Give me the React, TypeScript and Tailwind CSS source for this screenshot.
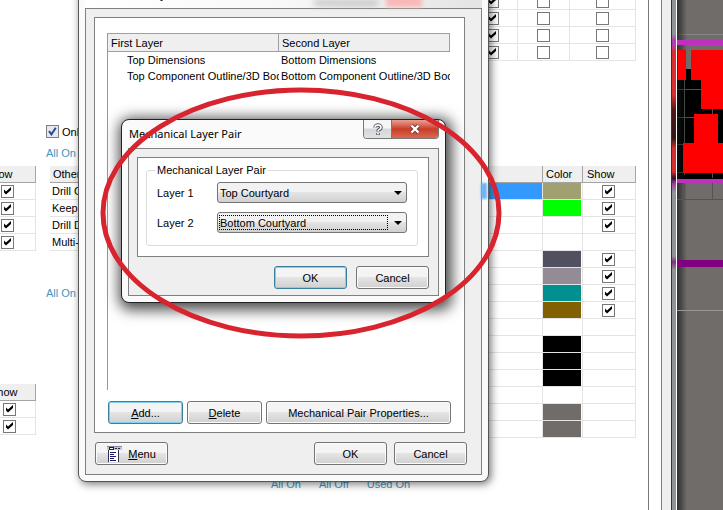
import React, { useId } from "react";

const UI = "font-['Liberation_Sans',Arial,sans-serif] text-[11px] leading-4 text-black";

function Tick({ blue = false }: { blue?: boolean }) {
  return (
    <svg className="pointer-events-none col-start-1 row-start-1 size-[9px]" viewBox="0 0 9 9">
      {blue ? (
        <path d="M1 4.2 L3.4 7.4 L7.8 0.8" fill="none" stroke="#34488c" strokeWidth="2" />
      ) : (
        <path d="M1 2.6 L3 4.6 L8 0 V3 L3 7.6 L1 5.6 Z" fill="#000" />
      )}
    </svg>
  );
}

function Check({ checked, label }: { checked?: boolean; label: string }) {
  return (
    <span className="mx-auto grid size-[13px] place-items-center">
      <input
        type="checkbox"
        aria-label={label}
        defaultChecked={checked}
        className="col-start-1 row-start-1 size-[13px] appearance-none border border-[#777] bg-white"
      />
      {checked && <Tick />}
    </span>
  );
}

const TH = "h-[17px] border-r border-b border-[#a5a5a5] bg-[#efefef] p-0 text-left font-normal whitespace-nowrap";
const TD = "h-[17px] border-r border-b border-[#e4e4e4] p-0 whitespace-nowrap leading-3";

function ShowTable({ rows, width, className }: { rows: string[]; width: string; className: string }) {
  return (
    <div className={"flex justify-end overflow-hidden " + className}>
      <table className={"shrink-0 table-fixed border-separate border-spacing-0 " + width}>
        <thead>
          <tr>
            <th className={TH + " pl-1.5"}>Show</th>
          </tr>
        </thead>
        <tbody>
          {rows.map((r) => (
            <tr key={r}>
              <td className={TD}>
                <Check checked label={"Show " + r} />
              </td>
            </tr>
          ))}
        </tbody>
      </table>
    </div>
  );
}

const SYSTEM: { color: string; show: boolean; selected?: boolean }[] = [
  { color: "bg-[#a0a070]", show: true, selected: true },
  { color: "bg-[#00ff00]", show: true },
  { color: "", show: true },
  { color: "", show: false },
  { color: "bg-[#505060]", show: true },
  { color: "bg-[#948c94]", show: true },
  { color: "bg-[#009090]", show: true },
  { color: "bg-[#806000]", show: true },
  { color: "", show: false },
  { color: "bg-black", show: false },
  { color: "bg-black", show: false },
  { color: "bg-black", show: false },
  { color: "", show: false },
  { color: "bg-[#706c6a]", show: false },
  { color: "bg-[#706c6a]", show: false },
];

function Link({ children }: { children: React.ReactNode }) {
  return (
    <a href="#" className="text-[#4096c4]">
      {children}
    </a>
  );
}

function LayersWindow() {
  return (
    <div className="flex min-w-0 flex-1">
      <div className="flex min-w-0 flex-1 flex-col overflow-hidden border-r border-[#777] bg-white">
        <div className="flex h-[476px] shrink-0 pr-3">
          <div className="w-9 shrink-0 pt-[166px]">
            <ShowTable rows={["signal 1", "signal 2", "signal 3", "signal 4"]} width="w-[57px]" className="" />
            <ShowTable rows={["mask 1", "mask 2"]} width="w-[52px]" className="mt-[133px]" />
          </div>
          <div className="ml-2.5 w-[230px] shrink-0 pt-[123px]">
            <label className="flex h-[17px] items-center gap-[3px]">
              <span className="grid size-[13px] place-items-center">
                <input
                  type="checkbox"
                  defaultChecked
                  className="col-start-1 row-start-1 size-[13px] appearance-none border border-[#808080] bg-[#e4e8f2]"
                />
                <Tick blue />
              </span>
              Only show enabled
            </label>
            <div className="mt-[5px] h-[21px]">
              <Link>All On</Link>
            </div>
            <table className="ml-1 w-[200px] table-fixed border-separate border-spacing-0">
              <thead>
                <tr>
                  <th className={TH + " pl-[3px]"}>Other Layers</th>
                </tr>
              </thead>
              <tbody>
                {["Drill Guide", "Keep-Out Layer", "Drill Drawing", "Multi-Layer"].map((n) => (
                  <tr key={n}>
                    <td className={TD + " pl-0.5"}>{n}</td>
                  </tr>
                ))}
              </tbody>
            </table>
            <div className="mt-[34px]">
              <Link>All On</Link>
            </div>
          </div>
          <div className="flex min-w-0 flex-1 flex-col">
            <table className="-mt-[7px] w-full table-fixed border-separate border-spacing-0">
              <colgroup>
                <col />
                <col className="w-[50px]" />
                <col className="w-[52px]" />
                <col className="w-[66px]" />
              </colgroup>
              <tbody>
                {[1, 2, 3, 4].map((n) => (
                  <tr key={n}>
                    <td className={TD} />
                    <td className={TD}>
                      <Check checked label={"Enable mechanical " + n} />
                    </td>
                    <td className={TD}>
                      <Check label={"Single layer mechanical " + n} />
                    </td>
                    <td className={TD}>
                      <Check label={"Link mechanical " + n} />
                    </td>
                  </tr>
                ))}
              </tbody>
            </table>
            <table className="mt-[105px] w-full table-fixed border-separate border-spacing-0">
              <colgroup>
                <col />
                <col className="w-10" />
                <col className="w-[53px]" />
              </colgroup>
              <thead>
                <tr>
                  <th className={TH} />
                  <th className={TH + " pl-[3px]"}>Color</th>
                  <th className={TH + " pl-1"}>Show</th>
                </tr>
              </thead>
              <tbody>
                {SYSTEM.map((r, i) => (
                  <tr key={i}>
                    <td className={TD + (r.selected ? " bg-[#3399ff]" : "")} />
                    <td className={TD}>
                      <div className={"h-4 w-[38px] " + r.color} />
                    </td>
                    <td className="h-[17px] border-r border-b border-[#e4e4e4] p-0 pr-0.5 leading-3">
                      {r.show && <Check checked label={"Show system colour " + (i + 1)} />}
                    </td>
                  </tr>
                ))}
              </tbody>
            </table>
          </div>
        </div>
        <div className="ml-[271px] flex shrink-0 gap-[18px]">
          <Link>All On</Link>
          <Link>All Off</Link>
          <Link>Used On</Link>
        </div>
      </div>
      <div className="w-[13px] border-r border-[#808080] bg-white" />
      <div className="w-[9px] bg-[#efefef]" />
      <div className="w-1.5 border-x border-l-[#303434] border-r-white bg-[linear-gradient(to_bottom,#909494_0,#909494_34px,#b040b0_40px,#b040b0_45px,#d83030_52px,#d83030_95px,#501818_110px,#301818_138px,#d03030_148px,#d03030_172px,#301030_178px,#a040a0_184px,#909494_192px,#909494_256px,#803080_262px,#909494_270px)]" />
    </div>
  );
}

function Board() {
  return (
    <div className="w-[46px] shrink-0 overflow-hidden bg-[#706c6a]">
      <svg width="46" height="510" viewBox="0 0 46 510" className="block" shapeRendering="crispEdges">
        <defs>
          <linearGradient id="edge" x1="0" x2="1" y1="0" y2="0">
            <stop offset="0" stopColor="#101414" stopOpacity="0.7" />
            <stop offset="1" stopColor="#101414" stopOpacity="0" />
          </linearGradient>
        </defs>
        <rect width="46" height="510" fill="#706c6a" />
        <rect y="34" width="46" height="1" fill="#858585" />
        <rect y="80" width="46" height="99" fill="#000" />
        <rect x="9" y="69" width="5" height="11" fill="#000" />
        <path d="M7.5 80V175M0 89.5H24M0 117.5H18M0 144.5H6M0 172.5H6" stroke="#4c524c" fill="none" />
        <rect width="10" height="510" fill="url(#edge)" />
        <rect y="40" width="46" height="5" fill="#c030c0" />
        <path d="M1 50H9V80H1ZM14 50H46V109H24V80H14ZM17 114H41V143H46V173H6V143H17Z" fill="#ff0000" />
        <path d="M35.5 109V114M35.5 173V178" stroke="#4c524c" />
        <rect y="179" width="46" height="4" fill="#c030c0" />
        <path d="M7.5 183V199M35.5 183V199M0 199.5H46" stroke="#555252" fill="none" />
        <rect y="260" width="46" height="7" fill="#800080" />
        <rect y="310" width="46" height="1" fill="#969696" />
      </svg>
    </div>
  );
}

function Button({ children, className, primary }: { children: React.ReactNode; className: string; primary?: boolean }) {
  return (
    <button
      type="button"
      className={
        "flex h-[23px] items-center justify-center rounded-[3px] border bg-linear-to-b from-[#f4f4f4] from-45% via-[#e4e4e4] via-50% to-[#d0d0d0] shadow-[inset_0_0_0_1px_#fbfbfb] " +
        (primary ? "border-[#3a7f9c] ring-1 ring-[#7fd0ec] ring-inset " : "border-[#747474] ") +
        className
      }
    >
      {children}
    </button>
  );
}

function MenuIcon() {
  return (
    <svg width="15" height="16" viewBox="0 0 15 16" shapeRendering="crispEdges" className="shrink-0">
      <rect x="0" y="0" width="15" height="4" fill="#c4c4d0" />
      <rect x="0" y="0" width="15" height="1" fill="#8888a0" />
      <rect x="2" y="1" width="5" height="3" fill="#181850" />
      <rect x="3" y="2" width="3" height="1" fill="#fff" />
      <path d="M8 2.5H10M11 2.5H13" stroke="#202050" />
      <rect x="1" y="4" width="10" height="12" fill="#fff" />
      <path d="M1.5 4V16M11.5 4V16" stroke="#333348" />
      <path d="M3 6.5H9M3 8.5H7M3 10.5H9M3 12.5H7M3 14.5H9" stroke="#181870" />
    </svg>
  );
}

function LayerPairsDialog() {
  return (
    <section
      aria-labelledby="pairs-title"
      className="absolute -top-5 left-[78px] w-[411px] rounded-lg border border-[#555] bg-[#fafafa] px-1.5 pb-1.5 shadow-[2px_2px_8px_rgba(0,0,0,0.55)]"
    >
      <header className="flex h-[27px] items-start bg-linear-to-r from-white via-[#f8f8f8] to-[#e4e4e4] pr-[60px]">
        <h1 id="pairs-title" className="mr-auto pt-[5px] pl-0.5 font-['Noto_Sans',sans-serif] text-[11px] leading-4">
          Mechanical Layer Pairs
        </h1>
        <span className="mt-5 mr-2 h-1 w-16 bg-[#b0b0b0] blur-[3px]" />
        <span className="h-[26px] w-9 bg-[#f8b8b8] blur-[2px]" />
      </header>
      <span className="absolute top-[202px] right-px h-4 w-1.5 bg-[#6cb4f4] blur-[1px]" />
      <div className="border border-[#808080] bg-[#efefef] p-2">
        <div className="mr-2 border border-[#808080] bg-white px-3 pt-[15px] pb-2">
          <div className="mr-[2px] h-[357px] border-l border-[#999]">
            <table className="w-full table-fixed border-separate border-spacing-0">
              <colgroup>
                <col className="w-[171px]" />
                <col />
              </colgroup>
              <thead>
                <tr>
                  <th className="h-[19px] border border-l-0 border-[#a0a0a0] bg-[#efefef] p-0 pl-[3px] text-left font-normal">First Layer</th>
                  <th className="h-[19px] border border-l-0 border-[#a0a0a0] bg-[#efefef] p-0 pl-[3px] text-left font-normal">Second Layer</th>
                </tr>
              </thead>
              <tbody>
                {[
                  ["Top Dimensions", "Bottom Dimensions"],
                  ["Top Component Outline/3D Body", "Bottom Component Outline/3D Body"],
                ].map(([a, b]) => (
                  <tr key={a}>
                    <td className="overflow-hidden p-0 pl-[19px] whitespace-nowrap">{a}</td>
                    <td className="overflow-hidden p-0 pl-0.5 whitespace-nowrap">{b}</td>
                  </tr>
                ))}
              </tbody>
            </table>
          </div>
          <div className="mt-[11px] mr-px ml-px flex gap-1">
            <Button primary className="w-[75px]">
              <span>
                <u>A</u>dd...
              </span>
            </Button>
            <Button className="w-[75px]">
              <span>
                <u>D</u>elete
              </span>
            </Button>
            <Button className="flex-1">Mechanical Pair Properties...</Button>
          </div>
        </div>
        <div className="mt-[9px] ml-px flex gap-[7px] pr-1.5 pb-px">
          <Button className="mr-auto w-[73px] gap-1.5">
            <MenuIcon />
            <span>
              <u>M</u>enu
            </span>
          </Button>
          <Button className="w-[73px]">OK</Button>
          <Button className="w-[73px]">Cancel</Button>
        </div>
      </div>
    </section>
  );
}

function LayerSelect({ label, value, focused }: { label: string; value: string; focused?: boolean }) {
  const id = useId();
  return (
    <div className="flex h-[21px] items-center">
      <label htmlFor={id} className="w-[60px]">
        {label}
      </label>
      <div className="relative flex-1">
        <select
          id={id}
          defaultValue={value}
          className="block h-[21px] w-full appearance-none rounded-[3px] border border-[#747474] bg-linear-to-b from-[#f2f2f2] from-45% via-[#e4e4e4] via-50% to-[#d0d0d0] pl-0.5"
        >
          <option>Top Courtyard</option>
          <option>Bottom Courtyard</option>
        </select>
        {focused && <span className="pointer-events-none absolute inset-y-[3px] right-[19px] left-0.5 border border-dotted border-black" />}
        <svg className="pointer-events-none absolute top-[9px] right-[5px]" width="8" height="4" viewBox="0 0 8 4">
          <path d="M0 0H8L4 4Z" fill="#000" />
        </svg>
      </div>
    </div>
  );
}

function LayerPairDialog() {
  return (
    <section
      aria-labelledby="pair-title"
      className="absolute top-[119px] left-[121px] w-[325px] rounded-lg border border-[#222] bg-[#fafafa] px-1.5 pb-1.5 shadow-[2px_3px_14px_4px_rgba(0,0,0,0.7)]"
    >
      <header className="flex h-7 items-start justify-between">
        <h1 id="pair-title" className="pt-1.5 pl-px font-['Noto_Sans',sans-serif] text-[11px] leading-4">
          Mechanical Layer Pair
        </h1>
        <div className="flex h-[19px] overflow-hidden rounded-b-[4px] border border-t-0 border-[#777]">
          <button type="button" aria-label="Help" className="grid w-7 place-items-center border-r border-[#777] bg-linear-to-b from-[#f6f6f6] from-45% via-[#d4d6d8] via-50% to-[#e0e2e4]">
            <svg width="10" height="13" viewBox="0 0 10 13" fill="none">
              <path d="M2 4.4C2 1.4 8 1.4 8 4.4C8 6.6 5 6.2 5 8.4M5 10V12" stroke="#555b66" strokeWidth="3.6" />
              <path d="M2 4.4C2 1.4 8 1.4 8 4.4C8 6.6 5 6.2 5 8.2M5 10V11.6" stroke="#fff" strokeWidth="1.6" />
            </svg>
          </button>
          <button type="button" aria-label="Close" className="grid w-[46px] place-items-center bg-linear-to-b from-[#e8a090] from-0% via-[#c83c28] via-50% to-[#dc6850]">
            <svg width="12" height="10" viewBox="0 0 12 10" fill="none">
              <path d="M2.5 1.5L9.5 8.5M9.5 1.5L2.5 8.5" stroke="#6c3838" strokeWidth="4" />
              <path d="M2.5 1.5L9.5 8.5M9.5 1.5L2.5 8.5" stroke="#fff" strokeWidth="2.4" />
            </svg>
          </button>
        </div>
      </header>
      <div className="border border-[#808080] bg-[#efefef] px-2 pt-2 pb-1.5">
        <div className="mr-px border border-[#808080] bg-white pt-1 pr-2.5 pb-2.5 pl-2">
          <fieldset className="rounded-[3px] border border-[#dcdcdc] px-2.5 pb-3">
            <legend className="-ml-0.5 px-0.5">Mechanical Layer Pair</legend>
            <div className="mt-1 flex flex-col gap-[9px]">
              <LayerSelect label="Layer 1" value="Top Courtyard" />
              <LayerSelect label="Layer 2" value="Bottom Courtyard" focused />
            </div>
          </fieldset>
        </div>
        <div className="mt-[9px] mr-px flex justify-end gap-[9px]">
          <Button primary className="w-[73px]">
            OK
          </Button>
          <Button className="w-[73px]">Cancel</Button>
        </div>
      </div>
    </section>
  );
}

export default function App() {
  return (
    <main className={"relative flex h-screen overflow-hidden " + UI}>
      <LayersWindow />
      <Board />
      <LayerPairsDialog />
      <LayerPairDialog />
      <svg className="pointer-events-none absolute top-[86px] left-[99px]" width="404" height="254" viewBox="0 0 404 254" fill="none">
        <ellipse cx="202" cy="127" rx="198" ry="123" stroke="#d8242e" strokeWidth="5" />
      </svg>
    </main>
  );
}
